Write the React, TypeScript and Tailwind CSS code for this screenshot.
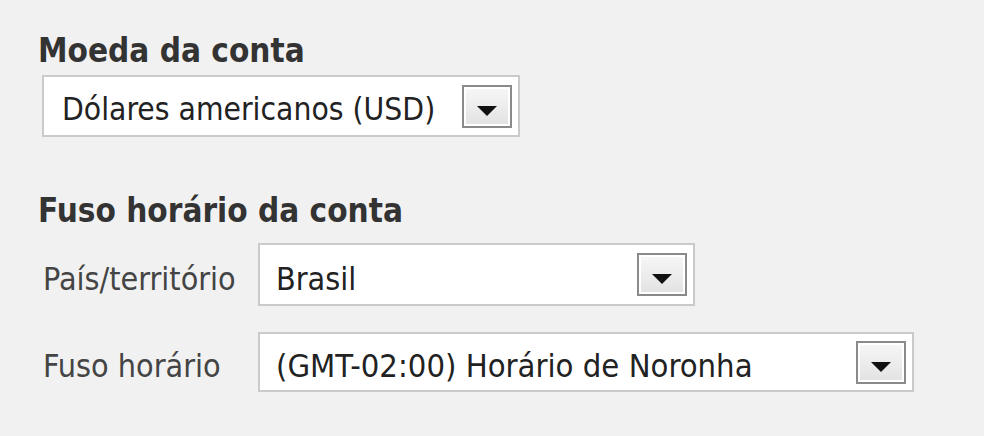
import React from "react";

function Arrow() {
  return (
    <div className="w-[50px] h-[43px] shrink-0 border-2 border-[#8a8a8a] bg-gradient-to-b from-[#f7f7f7] to-[#e2e2e2] flex items-center justify-center shadow-[inset_0_0_0_2px_#ffffff]">
      <svg width="22" height="12" viewBox="0 0 22 12" className="mt-[9px]">
        <polygon points="1,1 21,1 11,11" fill="#111" />
      </svg>
    </div>
  );
}

export default function App() {
  return (
    <div
      className="w-[984px] h-[436px] bg-[#f1f1f1] pl-[38px] pt-[31px] whitespace-nowrap"
      style={{ fontFamily: '"DejaVu Sans", Tahoma, sans-serif', fontStretch: "condensed" }}
    >
      <div className="text-[33px] font-bold text-[#333] leading-[40px]">Moeda da conta</div>
      <div className="ml-[4px] mt-[4px]">
        <div className="w-[478px] h-[62px] bg-white border-2 border-[#cacaca] flex items-center justify-between pl-[18px] pr-[6px]">
          <span className="text-[31.5px] text-[#222] mt-[8px]">Dólares americanos (USD)</span>
          <Arrow />
        </div>
      </div>
      <div className="text-[33px] font-bold text-[#333] leading-[40px] mt-[54px]">Fuso horário da conta</div>
      <div className="flex items-center mt-[12px]">
        <div className="w-[220px] pl-[5px] text-[32px] text-[#444] mt-[8px]">País/território</div>
        <div className="w-[437px] h-[63px] bg-white border-2 border-[#cacaca] flex items-center justify-between pl-[16px] pr-[6px]">
          <span className="text-[32px] text-[#222] mt-[8px]">Brasil</span>
          <Arrow />
        </div>
      </div>
      <div className="flex items-center mt-[26px]">
        <div className="w-[220px] pl-[5px] text-[32px] text-[#444] mt-[8px]">Fuso horário</div>
        <div className="w-[656px] h-[60px] bg-white border-2 border-[#cacaca] flex items-center justify-between pl-[16px] pr-[6px]">
          <span className="text-[32.5px] text-[#222] mt-[8px]">(GMT-02:00) Horário de Noronha</span>
          <Arrow />
        </div>
      </div>
    </div>
  );
}
